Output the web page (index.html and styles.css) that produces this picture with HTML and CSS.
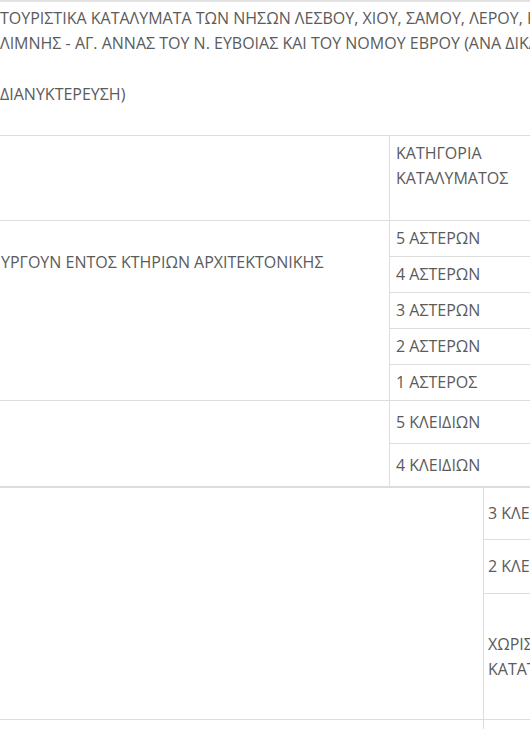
FILE: index.html
```html
<!DOCTYPE html>
<html lang="el">
<head>
<meta charset="utf-8">
<title>Κατηγορίες καταλυμάτων</title>
<link rel="stylesheet" href="styles.css">
</head>
<body>
<div class="page">
  <p class="intro">
    <span class="line">ΤΟΥΡΙΣΤΙΚΑ ΚΑΤΑΛΥΜΑΤΑ ΤΩΝ ΝΗΣΩΝ ΛΕΣΒΟΥ, ΧΙΟΥ, ΣΑΜΟΥ, ΛΕΡΟΥ, ΚΩ ΚΑΙ ΤΗΣ ΠΕΡΙΟΧΗΣ</span>
    <span class="line">ΛΙΜΝΗΣ - ΑΓ. ΑΝΝΑΣ ΤΟΥ Ν. ΕΥΒΟΙΑΣ ΚΑΙ ΤΟΥ ΝΟΜΟΥ ΕΒΡΟΥ (ΑΝΑ ΔΙΚΛΙΝΟ ΔΩΜΑΤΙΟ ΑΝΑ</span>
    <span class="line">&nbsp;</span>
    <span class="line">ΔΙΑΝΥΚΤΕΡΕΥΣΗ)</span>
  </p>

  <table class="grid upper">
    <colgroup><col class="u1"><col class="u2"></colgroup>
    <tr>
      <td class="blank"></td>
      <td class="head">ΚΑΤΗΓΟΡΙΑ<br>ΚΑΤΑΛΥΜΑΤΟΣ</td>
    </tr>
    <tr>
      <td rowspan="5" class="desc">ΥΡΓΟΥΝ ΕΝΤΟΣ ΚΤΗΡΙΩΝ ΑΡΧΙΤΕΚΤΟΝΙΚΗΣ</td>
      <td class="star">5 ΑΣΤΕΡΩΝ</td>
    </tr>
    <tr><td class="star">4 ΑΣΤΕΡΩΝ</td></tr>
    <tr><td class="star">3 ΑΣΤΕΡΩΝ</td></tr>
    <tr><td class="star">2 ΑΣΤΕΡΩΝ</td></tr>
    <tr><td class="star">1 ΑΣΤΕΡΟΣ</td></tr>
    <tr>
      <td rowspan="2" class="blank"></td>
      <td class="key">5 ΚΛΕΙΔΙΩΝ</td>
    </tr>
    <tr><td class="key">4 ΚΛΕΙΔΙΩΝ</td></tr>
  </table>

  <table class="grid lower">
    <colgroup><col class="l1"><col class="l2"></colgroup>
    <tr>
      <td rowspan="3" class="blank"></td>
      <td class="k1">3 ΚΛΕΙΔΙΩΝ</td>
    </tr>
    <tr><td class="k2">2 ΚΛΕΙΔΙΩΝ</td></tr>
    <tr><td class="none">ΧΩΡΙΣ<br>ΚΑΤΑΤΑΞΗ</td></tr>
    <tr>
      <td class="blank more"></td>
      <td class="more"></td>
    </tr>
  </table>
</div>
</body>
</html>
```

FILE: styles.css
```css
html, body {
  margin: 0;
  padding: 0;
  overflow: hidden;
  background: #ffffff;
}

body {
  font-family: "Open Sans", "Noto Sans", sans-serif;
  font-size: 16px;
  line-height: 25px;
  color: #5b5b5b;
}

.page {
  width: 900px;
  margin-left: -30px;
  border-top: 2px solid #e2e2e2;
}

.intro {
  margin: 0 0 28px;
  padding: 4px 0 0 30px;
  line-height: 25.3px;
}

.intro .line {
  display: block;
  white-space: nowrap;
}

.grid {
  border-collapse: collapse;
  table-layout: fixed;
  width: 900px;
}

.grid td {
  border: 1px solid #dddddd;
  vertical-align: middle;
  white-space: nowrap;
  padding: 0;
}

.upper .u1 { width: 419px; }
.upper .u2 { width: 481px; }

.upper .head {
  vertical-align: top;
  padding: 5px 6px 29px;
}

.upper .desc {
  vertical-align: top;
  padding: 29px 0 0 30px;
}

.upper .star {
  padding: 5px 6px;
}

.upper .key {
  padding: 9px 6px 8px;
}

.lower .l1 { width: 513px; }
.lower .l2 { width: 387px; }

.lower .k1 { padding: 13px 4px 13px; }
.lower .k2 { padding: 14px 4px 14px; }
.lower .none { padding: 38px 4px 37px; }
.lower .more { height: 60px; }
```
